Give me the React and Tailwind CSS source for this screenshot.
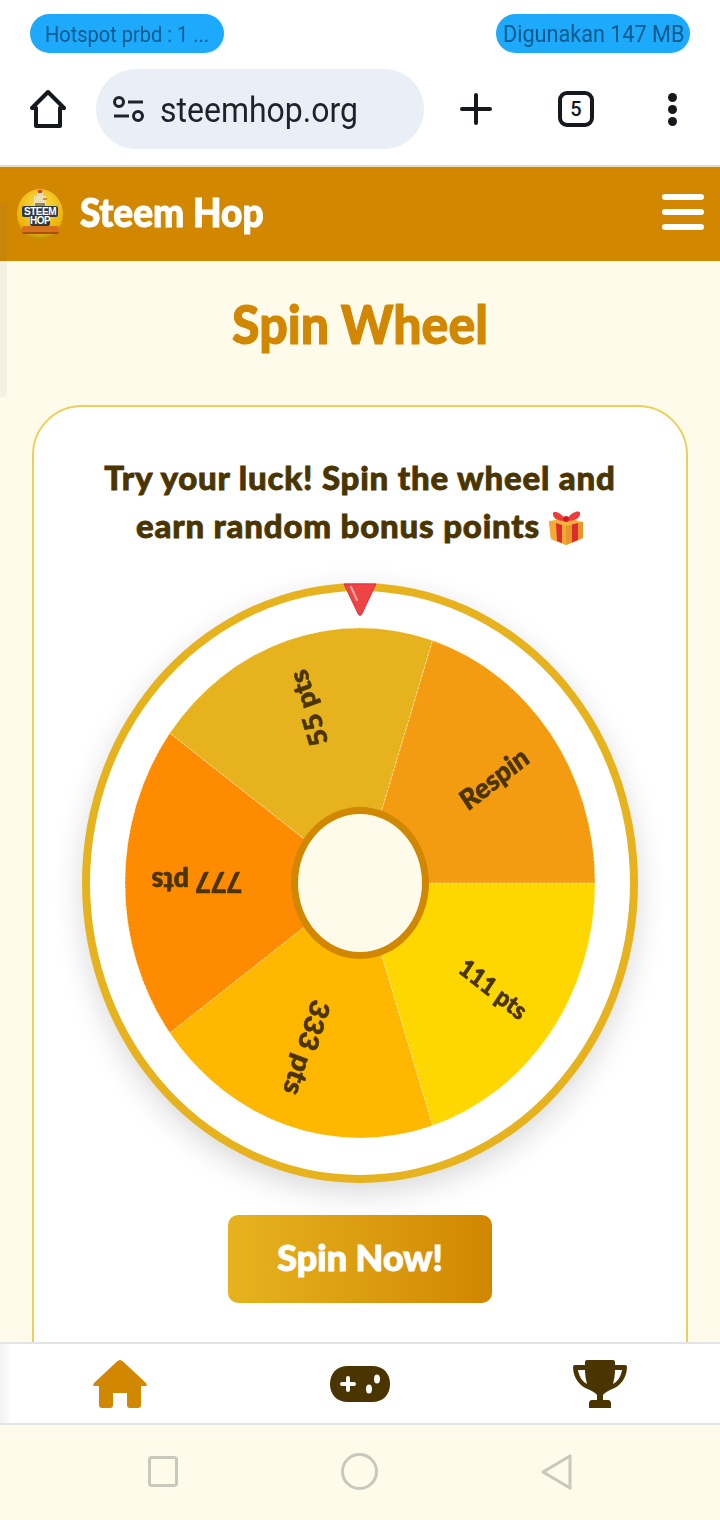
const brandFont = "font-['Lato','Liberation_Sans',sans-serif]";
const heavy = "font-black [-webkit-text-stroke:1px_currentColor]";

const segments = [
  { from: 0, to: 72, fill: "#ffd700", label: "111 pts", size: 23, angle: 36, dist: 165 },
  { from: 72, to: 144, fill: "#ffb700", label: "333 pts", size: 27, angle: 109, dist: 161 },
  { from: 144, to: 216, fill: "#ff8c00", label: "777 pts", size: 27, angle: 180, dist: 163 },
  { from: 216, to: 288, fill: "#e6b31e", label: "55 pts", size: 26, angle: 252, dist: 169 },
  { from: 288, to: 360, fill: "#f39c12", label: "Respin", size: 26, angle: 324, dist: 165 },
];

const RADIUS = 235;

function polar(angle, r = RADIUS) {
  const rad = (angle * Math.PI) / 180;
  return [Math.cos(rad) * r, Math.sin(rad) * r];
}

function slicePath(from, to) {
  const [x1, y1] = polar(from);
  const [x2, y2] = polar(to);
  return `M0 0L${x1} ${y1}A${RADIUS} ${RADIUS} 0 0 1 ${x2} ${y2}Z`;
}

function Wheel() {
  return (
    <svg className="blur-[0.5px]" width="470" height="510" viewBox="-235 -235 470 470" preserveAspectRatio="none">
      {segments.map((s) => (
        <path key={s.label} d={slicePath(s.from, s.to)} fill={s.fill} stroke="#fef3c7" strokeWidth="0.6" strokeDasharray="2 2" />
      ))}
      {segments.map((s) => (
        <text
          key={s.label}
          transform={`rotate(${s.angle}) translate(${s.dist} 0)`}
          textAnchor="middle"
          dominantBaseline="central"
          fill="#4a3500"
          stroke="#4a3500"
          strokeWidth="0.6"
          fontFamily="Lato, sans-serif"
          fontWeight="900"
          fontSize={s.size}
        >
          {s.label}
        </text>
      ))}
    </svg>
  );
}

function Pointer() {
  return (
    <svg className="absolute left-1/2 top-[-8px] -translate-x-1/2" width="36" height="34" viewBox="0 0 36 34">
      <path d="M2 1H34L19.500 31.500Q18 33.500 16.500 31.500Z" fill="#ef4444" stroke="#dc2f3c" strokeWidth="1" />
      <path d="M9 4L15 17" stroke="#fca5a5" strokeWidth="2" strokeLinecap="round" />
    </svg>
  );
}

function GiftIcon() {
  return (
    <svg className="inline-block align-[-8px] ml-2" width="36" height="36" viewBox="0 0 36 36">
      <path d="M1 11L20 8L35 12V28L18 35L3 29Z" fill="#f6b23c" />
      <path d="M18 16L35 12V28L18 35Z" fill="#e8962a" />
      <path d="M1 11L18 16V35L3 29Z" fill="#f5a833" />
      <path d="M8 13L14 15V33L9 31Z" fill="#dd2c2c" />
      <path d="M24 14.500L30 13V30L24 32.500Z" fill="#dd2c2c" />
      <path d="M17 9C12 1 5 1 5 3C4 8 10 11 16 11Z" fill="#ef3b3b" />
      <path d="M19 9C24 1 32 0 32 3C33 8 26 11 20 11Z" fill="#ef3b3b" />
      <circle cx="18" cy="9" r="3" fill="#c91f1f" />
    </svg>
  );
}

function Logo() {
  return (
    <div className="relative w-[46px] h-[50px] rounded-[50%] bg-[radial-gradient(circle_at_50%_35%,#ffe14d,#eab308_65%,#8a6a10)] shrink-0">
      <svg className="absolute left-[14px] top-[1px]" width="18" height="22" viewBox="0 0 18 22">
        <path d="M6 2H12V6H15V20H3V6H6Z" fill="#e9dfb4" />
        <rect x="7" y="0" width="4" height="3" fill="#d5402b" />
        <rect x="12" y="8" width="4" height="2" fill="#e78a1d" />
        <rect x="4" y="13" width="10" height="7" fill="#8f8a58" />
      </svg>
      <div className="absolute left-[5px] top-[17px] w-[36px] h-[11px] rounded-[2px] bg-[#2f3a3f]" />
      <div className="absolute left-[13px] top-[27px] w-[20px] h-[10px] rounded-[2px] bg-[#2f3a3f]" />
      <div className="absolute left-[5px] top-[18px] w-[36px] text-white text-[10px] leading-[9px] font-bold text-center font-['Liberation_Sans',sans-serif] tracking-[-0.5px]">
        <div>STEEM</div>
        <div>HOP</div>
      </div>
      <div className="absolute left-[5px] top-[37px] w-[37px] h-[8px] bg-[#d9711a] rounded-[2px] border-b-2 border-[#a9520f]" />
    </div>
  );
}

function BrowserBar() {
  return (
    <div className="bg-white h-[167px] border-b-2 border-[#e6dfc6] font-['Roboto',sans-serif]">
      <div className="flex justify-between pl-[30px] pr-[30px] pt-[14px]">
        <div className="w-[194px] h-[39px] rounded-full bg-[#1eaafc] text-[#0c5a8c] text-[22px] flex items-center pl-[15px] pt-[1px] whitespace-nowrap">
          <span className="scale-x-[0.91] origin-left">Hotspot prbd : 1 ...</span>
        </div>
        <div className="w-[194px] h-[39px] rounded-full bg-[#1eaafc] text-[#0c5a8c] text-[23px] flex items-center pl-[7px] pt-[3px] whitespace-nowrap">
          <span className="scale-x-[0.94] origin-left">Digunakan 147 MB</span>
        </div>
      </div>
      <div className="flex items-center mt-[16px] h-[80px]">
        <div className="w-[96px] flex justify-center">
          <svg width="36" height="38" viewBox="0 0 36 38" fill="none" stroke="#15181c" strokeWidth="4" strokeLinejoin="round">
            <path d="M18 2L34 18H30V36H6V18H2Z" />
          </svg>
        </div>
        <div className="w-[328px] h-[80px] rounded-full bg-[#e9eef7] flex items-center pl-[17px]">
          <svg width="31" height="26" viewBox="0 0 31 26" fill="none" stroke="#1f2328" strokeWidth="3">
            <circle cx="6" cy="6" r="4.500" />
            <path d="M15 6H30" />
            <path d="M1 20H16" />
            <circle cx="25" cy="20" r="4.500" />
          </svg>
          <span className="ml-[16px] pt-[2px] text-[32px] text-[#1f2328] scale-y-[1.08]">steemhop.org</span>
        </div>
        <div className="ml-[36px] w-[32px] flex justify-center">
          <svg width="32" height="32" viewBox="0 0 32 32" stroke="#15181c" strokeWidth="4" strokeLinecap="round">
            <path d="M16 2V30M2 16H30" />
          </svg>
        </div>
        <div className="ml-[66px] w-[36px] h-[36px] rounded-[9px] border-4 border-[#15181c] flex items-center justify-center text-[20px] font-medium text-[#15181c]">
          5
        </div>
        <div className="ml-[74px] flex flex-col gap-[3px]">
          <div className="w-[9px] h-[9px] rounded-full bg-[#15181c]" />
          <div className="w-[9px] h-[9px] rounded-full bg-[#15181c]" />
          <div className="w-[9px] h-[9px] rounded-full bg-[#15181c]" />
        </div>
      </div>
    </div>
  );
}

function TrophyIcon() {
  return (
    <svg width="54" height="48" viewBox="0 0 54 48">
      <path
        d="M14 0H40Q42 0 42 2V5H52Q54 5 54 7C54 18 47 27 37 30C34 32 31 33 30 35V40H35Q38 40 38 44V48H16V44Q16 40 19 40H24V35C23 33 20 32 17 30C7 27 0 18 0 7Q0 5 2 5H12V2Q12 0 14 0ZM5 10C6 17 10 22 14 24C13 20 12 15 12 10ZM49 10H42C42 15 41 20 40 24C44 22 48 17 49 10Z"
        fill="#4a3500"
        fillRule="evenodd"
      />
    </svg>
  );
}

function BottomNav() {
  return (
    <nav className="relative z-10 h-[83px] bg-white border-y-2 border-[#e3e5e5] grid grid-cols-3 items-center justify-items-center">
      <div className="absolute left-0 inset-y-0 w-[12px] bg-gradient-to-r from-black/5 to-transparent" />
      <svg width="54" height="48" viewBox="0 0 54 48">
        <path
          d="M27 0Q28.500 0 30 1.500L53 23Q55 26 52 26H48V45Q48 48 45 48H37Q34 48 34 45V33H20V45Q20 48 17 48H9Q6 48 6 45V26H2Q-1 26 1 23L24 1.500Q25.500 0 27 0Z"
          fill="#d18700"
        />
      </svg>
      {/* gamepad: solid rounded body, d-pad on the left and two buttons on the right */}
      <svg width="60" height="36" viewBox="0 0 60 36">
        <path d="M18 0H42C54 0 60 8 60 18C60 28 54 36 42 36H18C6 36 0 28 0 18C0 8 6 0 18 0Z" fill="#4a3500" />
        <path d="M18 12V24M12 18H24" stroke="#fff" strokeWidth="4" strokeLinecap="round" />
        <ellipse cx="47" cy="13" rx="3" ry="4.500" fill="#fff" />
        <ellipse cx="39" cy="23" rx="3" ry="4.500" fill="#fff" />
      </svg>
      <TrophyIcon />
    </nav>
  );
}

function SystemNav() {
  return (
    <div className="h-[95px] bg-[#fefbea] flex items-center justify-center gap-[163px] pb-[2px]">
      <div className="w-[30px] h-[31px] rounded-[4px] border-[3px] border-[#c9c8bd]" />
      <div className="w-[37px] h-[37px] rounded-full border-[3px] border-[#c9c8bd]" />
      <svg width="32" height="36" viewBox="0 0 32 36" fill="none" stroke="#c9c8bd" strokeWidth="3" strokeLinejoin="round">
        <path d="M29 2V34L2 18Z" />
      </svg>
    </div>
  );
}

export default function App() {
  return (
    <div className={`relative w-[720px] h-[1520px] overflow-hidden flex flex-col bg-[#fefbea] ${brandFont}`}>
      <BrowserBar />
      <header className="h-[94px] shrink-0 bg-[#d18700] flex items-center justify-between pl-[17px] pr-[16px]">
        <div className="flex items-center gap-[17px]">
          <Logo />
          <span className={`text-white text-[37px] mb-[5px] scale-y-[1.08] ${heavy}`}>Steem Hop</span>
        </div>
        <div className="flex flex-col gap-[9px] mb-[4px]">
          <div className="w-[42px] h-[6px] rounded-full bg-white" />
          <div className="w-[42px] h-[6px] rounded-full bg-white" />
          <div className="w-[42px] h-[6px] rounded-full bg-white" />
        </div>
      </header>
      {/* edge swipe handle, sits over the header and page */}
      <div className="absolute left-0 top-[203px] w-[7px] h-[194px] rounded-r-[4px] bg-gray-500/[0.07]" />
      <main className="flex-1 min-h-0 overflow-hidden px-[32px] pt-[31px]">
        <h1 className={`text-center text-[#d18700] text-[50px] leading-[62px] scale-y-[1.08] ${heavy}`}>Spin Wheel</h1>
        <section className="mt-[51px] bg-white border-2 border-[#ecd05e] rounded-[50px] h-[1000px] flex flex-col items-center pt-[46px]">
          <p className="text-center text-[#4a3500] text-[33px] tracking-[0.8px] leading-[48px] font-black [-webkit-text-stroke:0.8px_currentColor]">
            Try your luck! Spin the wheel and
            <br />
            earn random bonus points
            <GiftIcon />
          </p>
          <div className="relative mt-[34px] w-[556px] h-[600px] shrink-0 rounded-[50%] border-[8px] border-[#e6b31e] bg-white shadow-[0_10px_30px_rgba(0,0,0,0.15)] flex items-center justify-center">
            <Pointer />
            <Wheel />
            <div className="absolute left-1/2 top-1/2 -translate-x-1/2 -translate-y-1/2 w-[138px] h-[152px] rounded-[50%] bg-[#fefbea] border-[7px] border-[#d18700]" />
          </div>
          <button className={`mt-[32px] w-[264px] h-[88px] rounded-[10px] bg-gradient-to-r from-[#e6b31e] to-[#d18700] text-white text-[36px] pb-[5px] ${heavy}`}>
            Spin Now!
          </button>
        </section>
      </main>
      <BottomNav />
      <SystemNav />
    </div>
  );
}
